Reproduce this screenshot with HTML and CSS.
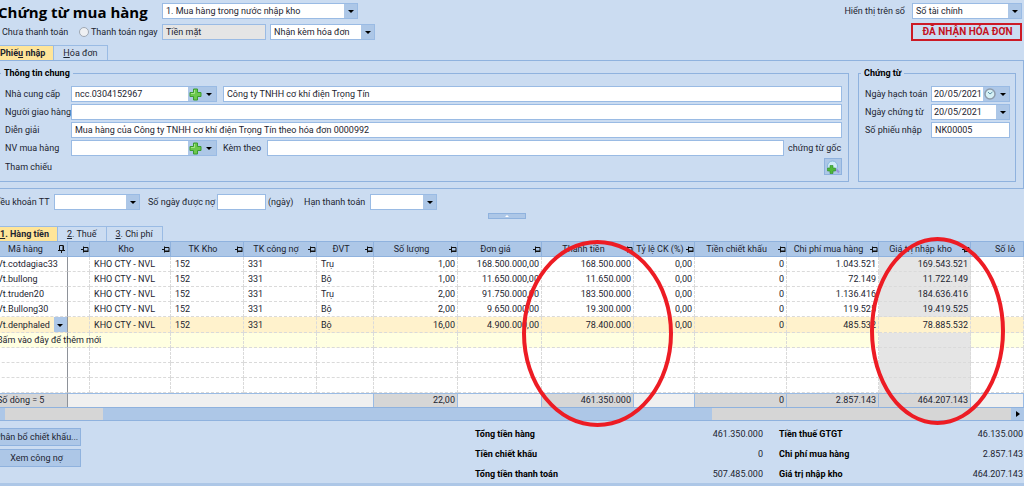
FILE: index.html
```html
<!DOCTYPE html>
<html lang="vi">
<head>
	<meta charset="UTF-8">
	<title>Chứng từ mua hàng</title>
	<link rel="stylesheet" href="styles.css">
</head>
<body>
	<svg class="defs" width="0" height="0">
		<symbol id="pin" viewBox="0 0 8 7">
			<path d="M0 3.500H2M2.500 0.500V6.500M3 1.500H7V5H3M3 5.500H7.500" fill="none" stroke="#111"/>
		</symbol>
		<symbol id="pin-on" viewBox="0 0 7 8">
			<path d="M1.500 5V0.500H5V5M5.500 0.500V5M0 5.500H7M3.500 6V8" fill="none" stroke="#111"/>
		</symbol>
		<symbol id="plus" viewBox="0 0 13 13">
			<path d="M4.500 1H8.500V4.500H12V8.500H8.500V12H4.500V8.500H1V4.500H4.500Z" fill="#6cc84c" stroke="#3a9b2f"/>
			<path d="M5.500 2V5.500H2" fill="none" stroke="#a8e58c"/>
		</symbol>
	</svg>
	<div class="window">
		<div class="header">
			<div class="header-left">
				<h1>Chứng từ mua hàng</h1>
				<span class="combo combo-type">
					<select aria-label="Loại chứng từ"><option>1. Mua hàng trong nước nhập kho</option></select>
				</span>
				<div class="pay">
					<label class="pay-later"><input type="radio" name="pay" checked>Chưa thanh toán</label>
					<label class="pay-now"><input type="radio" name="pay">Thanh toán ngay</label>
				</div>
				<div class="pay-detail">
					<input class="cash" type="text" value="Tiền mặt" aria-label="Hình thức" disabled>
					<span class="combo combo-invoice">
						<select aria-label="Hóa đơn"><option>Nhận kèm hóa đơn</option></select>
					</span>
				</div>
			</div>
			<div class="header-right">
				<div class="book">
					<label for="book">Hiển thị trên sổ</label>
					<span class="combo"><select id="book"><option>Sổ tài chính</option></select></span>
				</div>
				<div class="stamp">ĐÃ NHẬN HÓA ĐƠN</div>
			</div>
		</div>

		<div class="tabs">
			<button class="tab on" type="button">Phiế<u>u</u> nhập</button>
			<button class="tab" type="button"><u>H</u>óa đơn</button>
		</div>
		<div class="panel">
			<fieldset class="general">
				<legend>Thông tin chung</legend>
				<div class="row">
					<label for="supplier">Nhà cung cấp</label>
					<span class="picker">
						<input id="supplier" type="text" value="ncc.0304152967">
						<button type="button" aria-label="Thêm nhà cung cấp"><svg width="13" height="13"><use href="#plus"/></svg></button>
						<button class="drop" type="button" aria-label="Chọn"></button>
					</span>
					<input class="grow" type="text" value="Công ty TNHH cơ khí điện Trọng Tín" aria-label="Tên nhà cung cấp">
				</div>
				<div class="row">
					<label for="shipper">Người giao hàng</label>
					<input id="shipper" class="grow" type="text">
				</div>
				<div class="row">
					<label for="note">Diễn giải</label>
					<input id="note" class="grow" type="text" value="Mua hàng của Công ty TNHH cơ khí điện Trọng Tín theo hóa đơn 0000992">
				</div>
				<div class="row">
					<label for="staff">NV mua hàng</label>
					<span class="picker">
						<input id="staff" type="text">
						<button type="button" aria-label="Thêm nhân viên"><svg width="13" height="13"><use href="#plus"/></svg></button>
						<button class="drop" type="button" aria-label="Chọn"></button>
					</span>
					<label class="attach" for="attach">Kèm theo</label>
					<input id="attach" class="grow" type="text">
					<span class="unit">chứng từ gốc</span>
				</div>
				<div class="row row-ref">
					<span class="label">Tham chiếu</span>
					<button class="find" type="button" aria-label="Chọn tham chiếu">
						<svg width="14" height="14" viewBox="0 0 14 14">
							<path d="M10 9L13 12.500" stroke="#9a94dc" stroke-width="2"/>
							<circle cx="6.500" cy="6" r="5" fill="#cfeaf8" stroke="#86b6dd"/>
							<path d="M4 5.500H7V8H9.500V11H7V13.500H4V11H1.500V8H4Z" fill="#4fb83a" stroke="#2e8b2a" stroke-width="0.600"/>
						</svg>
					</button>
				</div>
			</fieldset>
			<fieldset class="voucher">
				<legend>Chứng từ</legend>
				<div class="row">
					<label for="posted">Ngày hạch toán</label>
					<span class="picker">
						<input id="posted" type="text" value="20/05/2021">
						<button type="button" aria-label="Giờ">
							<svg width="12" height="12" viewBox="0 0 12 12">
								<circle cx="6" cy="6" r="5" fill="#d5f0f5" stroke="#8d9bab" stroke-width="1.500"/>
								<path d="M4 4L6 6L8.500 4" fill="none" stroke="#5c8fa5"/>
							</svg>
						</button>
						<button class="drop" type="button" aria-label="Chọn ngày"></button>
					</span>
				</div>
				<div class="row">
					<label for="issued">Ngày chứng từ</label>
					<span class="picker">
						<input id="issued" type="text" value="20/05/2021">
						<button class="drop" type="button" aria-label="Chọn ngày"></button>
					</span>
				</div>
				<div class="row">
					<label for="number">Số phiếu nhập</label>
					<input id="number" class="grow" type="text" value="NK00005">
				</div>
			</fieldset>
		</div>

		<div class="terms">
			<label class="terms-name" for="terms">Điều khoản TT</label>
			<span class="combo combo-terms"><select id="terms"><option></option></select></span>
			<label class="terms-days" for="days">Số ngày được nợ</label>
			<input id="days" type="text">
			<span class="days-unit">(ngày)</span>
			<label class="terms-due" for="due">Hạn thanh toán</label>
			<span class="combo combo-due"><select id="due"><option></option></select></span>
		</div>
		<div class="splitter"><button type="button" aria-label="Thu gọn"></button></div>

		<div class="tabs">
			<button class="tab on" type="button"><u>1</u>. Hàng tiền</button>
			<button class="tab" type="button"><u>2</u>. Thuế</button>
			<button class="tab" type="button"><u>3</u>. Chi phí</button>
		</div>
		<div class="grid">
			<table>
				<colgroup>
					<col class="c-code"><col class="c-name"><col class="c-store"><col class="c-acc"><col class="c-debt"><col class="c-unit"><col class="c-qty"><col class="c-qty"><col class="c-total"><col class="c-rate"><col class="c-money"><col class="c-money"><col class="c-money"><col class="c-lot">
				</colgroup>
				<thead>
					<tr>
						<th><div>Mã hàng<svg width="7" height="8"><use href="#pin-on"/></svg></div></th>
						<th><div><svg width="8" height="7"><use href="#pin"/></svg></div></th>
						<th><div>Kho<svg width="8" height="7"><use href="#pin"/></svg></div></th>
						<th><div>TK Kho<svg width="8" height="7"><use href="#pin"/></svg></div></th>
						<th><div>TK công nợ<svg width="8" height="7"><use href="#pin"/></svg></div></th>
						<th><div>ĐVT<svg width="8" height="7"><use href="#pin"/></svg></div></th>
						<th><div>Số lượng<svg width="8" height="7"><use href="#pin"/></svg></div></th>
						<th><div>Đơn giá<svg width="8" height="7"><use href="#pin"/></svg></div></th>
						<th><div>Thành tiền<svg width="8" height="7"><use href="#pin"/></svg></div></th>
						<th><div>Tỷ lệ CK (%)<svg width="8" height="7"><use href="#pin"/></svg></div></th>
						<th><div>Tiền chiết khấu<svg width="8" height="7"><use href="#pin"/></svg></div></th>
						<th><div>Chi phí mua hàng<svg width="8" height="7"><use href="#pin"/></svg></div></th>
						<th><div>Giá trị nhập kho<svg width="8" height="7"><use href="#pin"/></svg></div></th>
						<th><div>Số lô</div></th>
					</tr>
				</thead>
				<tbody>
					<tr><td>Vt.cotdagiac33</td><td></td><td>KHO CTY - NVL</td><td>152</td><td>331</td><td>Trụ</td><td class="num">1,00</td><td class="num">168.500.000,00</td><td class="num">168.500.000</td><td class="num">0,00</td><td class="num">0</td><td class="num">1.043.521</td><td class="num lock">169.543.521</td><td></td></tr>
					<tr><td>Vt.bullong</td><td></td><td>KHO CTY - NVL</td><td>152</td><td>331</td><td>Bộ</td><td class="num">1,00</td><td class="num">11.650.000,00</td><td class="num">11.650.000</td><td class="num">0,00</td><td class="num">0</td><td class="num">72.149</td><td class="num lock">11.722.149</td><td></td></tr>
					<tr><td>Vt.truden20</td><td></td><td>KHO CTY - NVL</td><td>152</td><td>331</td><td>Trụ</td><td class="num">2,00</td><td class="num">91.750.000,00</td><td class="num">183.500.000</td><td class="num">0,00</td><td class="num">0</td><td class="num">1.136.416</td><td class="num lock">184.636.416</td><td></td></tr>
					<tr><td>Vt.Bullong30</td><td></td><td>KHO CTY - NVL</td><td>152</td><td>331</td><td>Bộ</td><td class="num">2,00</td><td class="num">9.650.000,00</td><td class="num">19.300.000</td><td class="num">0,00</td><td class="num">0</td><td class="num">119.525</td><td class="num lock">19.419.525</td><td></td></tr>
					<tr class="current"><td class="edit"><span class="combo"><select aria-label="Mã hàng"><option>Vt.denphaled</option></select></span></td><td></td><td>KHO CTY - NVL</td><td>152</td><td>331</td><td>Bộ</td><td class="num">16,00</td><td class="num">4.900.000,00</td><td class="num">78.400.000</td><td class="num">0,00</td><td class="num">0</td><td class="num">485.532</td><td class="num">78.885.532</td><td></td></tr>
					<tr class="new"><td>Bấm vào đây để thêm mới</td><td></td><td></td><td></td><td></td><td></td><td></td><td></td><td></td><td></td><td></td><td></td><td class="lock"></td><td></td></tr>
					<tr><td></td><td></td><td></td><td></td><td></td><td></td><td></td><td></td><td></td><td></td><td></td><td></td><td class="lock"></td><td></td></tr>
					<tr><td></td><td></td><td></td><td></td><td></td><td></td><td></td><td></td><td></td><td></td><td></td><td></td><td class="lock"></td><td></td></tr>
					<tr><td></td><td></td><td></td><td></td><td></td><td></td><td></td><td></td><td></td><td></td><td></td><td></td><td class="lock"></td><td></td></tr>
				</tbody>
				<tfoot>
					<tr><td class="sum">Số dòng = 5</td><td colspan="5"></td><td class="num sum">22,00</td><td></td><td class="num sum">461.350.000</td><td></td><td class="num sum">0</td><td class="num sum">2.857.143</td><td class="num sum">464.207.143</td><td></td></tr>
				</tfoot>
			</table>
			<div class="scroll">
				<button class="scroll-left" type="button" aria-label="Cuộn trái"></button>
				<div class="thumb"></div>
				<button class="scroll-right" type="button" aria-label="Cuộn phải"></button>
			</div>
			<div class="mark mark-total"></div>
			<div class="mark mark-stock"></div>
		</div>

		<div class="footer">
			<div class="actions">
				<button type="button">Phân bổ chiết khấu...</button>
				<button type="button">Xem công nợ</button>
			</div>
			<dl class="totals-left">
				<dt>Tổng tiền hàng</dt><dd>461.350.000</dd>
				<dt>Tiền chiết khấu</dt><dd>0</dd>
				<dt>Tổng tiền thanh toán</dt><dd>507.485.000</dd>
			</dl>
			<dl class="totals-right">
				<dt>Tiền thuế GTGT</dt><dd>46.135.000</dd>
				<dt>Chi phí mua hàng</dt><dd>2.857.143</dd>
				<dt>Giá trị nhập kho</dt><dd>464.207.143</dd>
			</dl>
		</div>
	</div>
</body>
</html>
```
FILE: styles.css
```css
*{
	margin:0;
	padding:0;
	box-sizing:border-box;
}
body{
	background:#cbdcf1;
	color:#1c2430;
	font-family:Roboto, "Liberation Sans", sans-serif;
	font-size:9px;
	line-height:14px;
	overflow:hidden;
}
button, input, select{
	font:inherit;
	color:inherit;
	border-radius:0;
}
button{
	background:#adc7e7;
	border:1px solid #8fb2de;
}
input[type=text]{
	height:16px;
	min-width:0;
	padding:0 3px;
	background:#fff;
	border:1px solid #9abbe4;
}
.defs{
	position:absolute;
}
/* the form runs past the left edge of the window */
.window{
	margin-left:-8px;
	min-height:100vh;
	display:flex;
	flex-direction:column;
	border-bottom:3px solid #adc7e7;
}

.combo{
	display:block;
	position:relative;
}
.combo select{
	display:block;
	width:100%;
	height:16px;
	padding:0 14px 0 3px;
	appearance:none;
	border:1px solid #9abbe4;
	background:linear-gradient(#adc7e7, #adc7e7) right / 13px 100% no-repeat #fff;
}
.combo::after, .drop::after{
	content:"";
	border:3px solid transparent;
	border-top-color:#000;
	border-bottom:0;
}
.combo::after{
	position:absolute;
	right:4px;
	top:7px;
	pointer-events:none;
}

.header{
	display:flex;
	justify-content:space-between;
	padding:3px 2px 0 0;
}
.header-left{
	display:grid;
	grid-template-columns:170px auto;
	row-gap:5px;
	align-content:start;
}
h1{
	height:16px;
	padding-left:6px;
	font:bold 15px/18px "Open Sans", "Noto Sans", sans-serif;
	color:#000;
	white-space:nowrap;
}
.combo-type{
	width:196px;
}
.pay{
	display:flex;
	align-items:center;
}
.pay label{
	display:flex;
	align-items:center;
	gap:2px;
	white-space:nowrap;
}
.pay input{
	appearance:none;
	width:10px;
	height:10px;
	border:1px solid #9fa8b3;
	border-radius:50%;
	background:#eef0f3;
}
.pay-later{
	width:87px;
}
.pay-later input{
	margin-left:-2px;
}
.pay-detail{
	display:flex;
	gap:4px;
}
.pay-detail .cash{
	width:104px;
	background:#e5e5e5;
}
.combo-invoice{
	width:105px;
}
.header-right{
	display:flex;
	flex-direction:column;
	align-items:flex-end;
	gap:4px;
}
.book{
	display:flex;
	align-items:center;
	gap:7px;
}
.book .combo{
	width:110px;
}
.stamp{
	width:111px;
	height:18px;
	border:2px solid #cc1a26;
	color:#c4121f;
	font-size:10px;
	font-weight:bold;
	text-align:center;
	padding-left:2px;
}

.tabs{
	display:flex;
}
.header + .tabs{
	margin-top:4px;
}
.tab{
	height:15px;
	padding:0 9px;
	background:#cbdcf1;
	border:1px solid #9abbe4;
	border-left:0;
	border-bottom:0;
}
.tab.on{
	background:#ffe599;
	font-weight:bold;
	padding:0 8px;
}
.panel{
	display:flex;
	gap:9px;
	padding:4px 7px 6px 4px;
	border:1px solid #8fb2de;
}
fieldset{
	min-width:0;
	border:1px solid #8fb2de;
}
legend{
	height:16px;
	margin-left:-4px;
	padding:0 3px;
	line-height:16px;
	font-weight:bold;
	color:#000;
}
.general{
	flex:1;
	padding:5px 6px 6px 7px;
}
.voucher{
	width:158px;
	padding:5px 5px 6px 6px;
}
.row{
	display:flex;
	align-items:center;
	height:16px;
	margin-bottom:2px;
}
.row label:first-child, .row .label{
	width:66px;
	white-space:nowrap;
}
.row .grow{
	flex:1;
}
.general .row .attach{
	width:44px;
}
.unit{
	width:58px;
	padding-left:4px;
}
.row-ref{
	height:17px;
	margin-bottom:0;
	justify-content:space-between;
}
.find{
	display:grid;
	place-items:center;
	width:18px;
	height:17px;
}
.picker{
	display:flex;
	height:16px;
	border:1px solid #9abbe4;
}
.general .picker{
	width:146px;
	margin-right:6px;
}
.voucher .picker{
	flex:1;
}
.picker input[type=text]{
	flex:1;
	height:14px;
	width:20px;
	border:0;
}
.voucher .picker input[type=text]{
	padding:0 0 0 2px;
}
.picker button{
	display:grid;
	place-items:center;
	width:14px;
	border:0;
}
.voucher .picker button{
	width:13px;
}

.terms{
	display:flex;
	align-items:center;
	padding-top:5px;
	white-space:nowrap;
}
.terms-name{
	width:62px;
	padding-right:5px;
	text-align:right;
}
.combo-terms{
	width:86px;
}
.terms-days{
	width:77px;
	padding-left:8px;
}
#days{
	width:49px;
}
.days-unit{
	width:38px;
	padding-left:2px;
}
.terms-due{
	width:66px;
}
.combo-due{
	width:67px;
}
.splitter{
	display:flex;
	justify-content:center;
	padding:3px 3px 7px 0;
}
.splitter button{
	display:flex;
	align-items:center;
	justify-content:center;
	width:38px;
	height:6px;
}
.splitter button::after{
	content:"";
	border:2px solid transparent;
	border-bottom-color:#fff;
	border-top:0;
}

.grid{
	position:relative;
	border-top:1px solid #8fb2de;
}
table{
	width:100%;
	table-layout:fixed;
	border-collapse:separate;
	border-spacing:0;
	background:#fff;
}
.c-code{width:76px;}
.c-name{width:22px;}
.c-store{width:81px;}
.c-acc{width:73px;}
.c-debt{width:73px;}
.c-unit{width:57px;}
.c-qty{width:84px;}
.c-total{width:92px;}
.c-rate{width:61px;}
.c-money{width:92px;}
th{
	height:15px;
	background:#adc7e7;
	border-right:1px solid #8fb2de;
	border-bottom:1px solid #8fb2de;
	font-weight:normal;
	line-height:14px;
}
th div{
	position:relative;
	display:flex;
	align-items:center;
	justify-content:center;
	height:14px;
	padding-right:8px;
	white-space:nowrap;
}
th svg{
	position:absolute;
	right:0;
}
th:first-child svg{
	right:2px;
}
th:last-child div{
	justify-content:flex-start;
	padding-left:24px;
}
td{
	height:15px;
	padding:0 4px;
	border-right:1px dashed #dadada;
	border-bottom:1px dashed #dadada;
	line-height:14px;
	white-space:nowrap;
}
td:first-child{
	padding-left:5px;
	border-right:1px solid #8e9299;
}
.num{
	padding:0 2px;
	text-align:right;
}
.lock{
	background:#e5e5e5;
}
.current td{
	height:16px;
	background:#fff2cc;
}
td.edit{
	padding:0;
}
.edit .combo select{
	height:15px;
	padding-left:5px;
	border:0;
	background-color:#fff2cc;
}
.new td:not(.lock){
	background:#ffffe1;
}
tfoot td{
	height:14px;
	background:#f0f0f0;
	border-top:1px solid #9abbe4;
	border-bottom:0;
	border-right:1px solid #9abbe4;
	line-height:13px;
}
tfoot .sum{
	background:#d6d6d6;
}
.scroll{
	display:flex;
	height:14px;
	background:#d6d6d6;
	border-top:1px solid #8fb2de;
	border-bottom:1px solid #8fb2de;
}
.scroll button{
	width:13px;
	border:0;
}
.thumb{
	flex:1;
	margin:0 29% 0 9.5%;
	background:#adc7e7;
}
.scroll-right{
	display:grid;
	place-items:center;
}
.scroll-right::after{
	content:"";
	border:3px solid transparent;
	border-left:4px solid #000;
	border-right:0;
}
/* hand-drawn circles over the two value columns */
.mark{
	position:absolute;
	border:4px solid #ed1c24;
	border-radius:50%;
	pointer-events:none;
}
.mark-total{
	left:530px;
	top:-2px;
	width:151px;
	height:187px;
}
.mark-stock{
	left:878px;
	top:-5px;
	width:135px;
	height:188px;
}

.footer{
	display:flex;
	padding:7px 1px 0 0;
}
.actions{
	display:flex;
	flex-direction:column;
	gap:3px;
	margin-right:auto;
}
.actions button{
	width:89px;
	height:18px;
	white-space:nowrap;
}
dl{
	display:grid;
	grid-template-columns:auto auto;
	align-content:start;
	row-gap:7px;
	line-height:13px;
}
dt{
	font-weight:bold;
	color:#000;
}
dd{
	text-align:right;
}
.totals-left{
	width:288px;
	margin-right:16px;
}
.totals-right{
	width:244px;
}
```
